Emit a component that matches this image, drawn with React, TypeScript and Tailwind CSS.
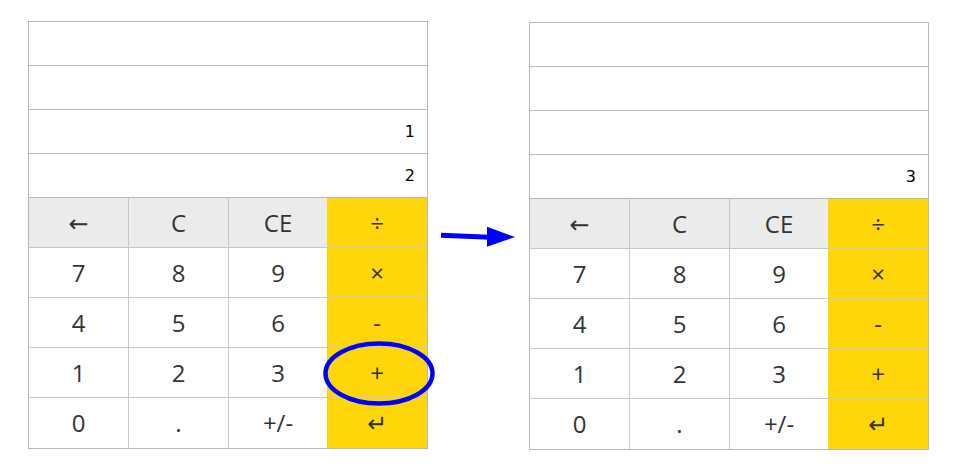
import React from "react";

type Key = { label: string; kind: "gray" | "num" | "op" };

const rows: Key[][] = [
  [
    { label: "←", kind: "gray" },
    { label: "C", kind: "gray" },
    { label: "CE", kind: "gray" },
    { label: "÷", kind: "op" },
  ],
  [
    { label: "7", kind: "num" },
    { label: "8", kind: "num" },
    { label: "9", kind: "num" },
    { label: "×", kind: "op" },
  ],
  [
    { label: "4", kind: "num" },
    { label: "5", kind: "num" },
    { label: "6", kind: "num" },
    { label: "-", kind: "op" },
  ],
  [
    { label: "1", kind: "num" },
    { label: "2", kind: "num" },
    { label: "3", kind: "num" },
    { label: "+", kind: "op" },
  ],
  [
    { label: "0", kind: "num" },
    { label: ".", kind: "num" },
    { label: "+/-", kind: "num" },
    { label: "↵", kind: "op" },
  ],
];

function Calculator({ display, withCircle }: { display: string[]; withCircle?: boolean }) {
  return (
    <div className="relative w-[400px] border border-[#b8b8b8] bg-white">
      {display.map((v, i) => (
        <div
          key={i}
          className="h-[44px] border-b border-[#b8b8b8] flex items-center justify-end pr-[12px] text-[16px] text-black"
          style={{ fontFamily: '"DejaVu Sans", sans-serif' }}
        >
          {v}
        </div>
      ))}
      {rows.map((row, ri) => (
        <div
          key={ri}
          className={
            "flex h-[50px] " +
            (ri < rows.length - 1 ? "border-b border-[#c8c8c8]" : "")
          }
          style={{ fontFamily: '"Open Sans", "DejaVu Sans", sans-serif' }}
        >
          {row.map((k, ci) => {
            const w =
              ci === 0 ? "w-[100px] border-r border-[#c8c8c8]" : ci === 1 ? "w-[100px] border-r border-[#c8c8c8]" : ci === 2 ? "w-[98px]" : "w-[100px]";
            const bg = k.kind === "gray" ? "bg-[#ebebeb]" : k.kind === "op" ? "bg-[#ffd60a]" : "bg-white";
            return (
              <div
                key={ci}
                className={`${w} ${bg} h-full flex items-center justify-center text-[24px] text-[#333333]`}
              >
                {k.label}
              </div>
            );
          })}
        </div>
      ))}
      {withCircle && (
        <svg
          className="absolute left-[288px] top-[314px] pointer-events-none"
          width="124"
          height="76"
          viewBox="0 0 124 76"
        >
          <ellipse cx="62" cy="37.5" rx="53.5" ry="30" fill="none" stroke="#0000ff" strokeWidth="4.5" />
        </svg>
      )}
    </div>
  );
}

export default function App() {
  return (
    <div className="w-[960px] h-[472px] bg-white flex items-start pl-[28px] pt-[21px]">
      <Calculator display={["", "", "1", "2"]} withCircle />
      <svg width="101" height="260" viewBox="0 0 101 260" className="shrink-0">
        <line x1="13" y1="214.2" x2="62" y2="216.2" stroke="#0000ff" strokeWidth="5" />
        <polygon points="59,205.7 59,225.7 87,216" fill="#0000ff" />
      </svg>
      <div className="mt-[1px]">
        <Calculator display={["", "", "", "3"]} />
      </div>
    </div>
  );
}
